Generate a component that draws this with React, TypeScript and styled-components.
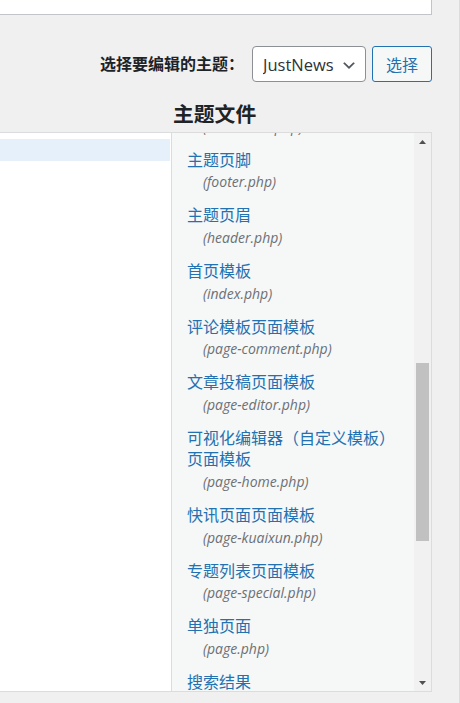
import React, { useLayoutEffect, useRef } from "react";
import styled, { createGlobalStyle } from "styled-components";

const GlobalStyle = createGlobalStyle`
  html, body {
    margin: 0;
    background: #f0f0f1;
  }
  body {
    font-family: "Open Sans", "Noto Sans CJK SC", sans-serif;
    font-size: 16px;
    color: #3c434a;
  }
`;

const Page = styled.div`
  box-sizing: border-box;
  width: 460px;
  min-height: 703px;
  padding-right: 27px;
  border-right: 1px solid #dcdcde;
`;

const TopBox = styled.div`
  box-sizing: border-box;
  height: 15px;
  background: #fff;
  border-right: 1px solid #c3c4c7;
  border-bottom: 1px solid #c3c4c7;
`;

const ThemeRow = styled.form`
  display: flex;
  justify-content: flex-end;
  align-items: center;
  margin: 31px 0 0;
  height: 36px;
`;

const Label = styled.label`
  margin-right: 8px;
  font-weight: 600;
  color: #1d2327;
  line-height: 36px;
`;

const SelectWrap = styled.div`
  position: relative;
  width: 114px;
  height: 36px;
`;

const Select = styled.select`
  appearance: none;
  box-sizing: border-box;
  width: 100%;
  height: 100%;
  margin: 0;
  padding: 0 24px 0 10px;
  border: 1px solid #8c8f94;
  border-radius: 4px;
  background: #fff;
  color: #2c3338;
  font: inherit;
  font-size: 16.5px;
`;

const Chevron = styled.svg`
  position: absolute;
  right: 9px;
  top: 11px;
  width: 16px;
  height: 16px;
  pointer-events: none;
`;

const Button = styled.button`
  box-sizing: border-box;
  width: 60px;
  height: 36px;
  margin-left: 6px;
  padding: 0;
  border: 1px solid #2271b1;
  border-radius: 3px;
  background: #f6f7f7;
  color: #2271b1;
  font: inherit;
  font-size: 16px;
`;

const EditorGrid = styled.div`
  display: grid;
  grid-template-columns: 171px 1fr;
`;

const Heading = styled.h2`
  grid-column: 2;
  margin: 18px 0 4px;
  padding-left: 2px;
  font-size: 20.8px;
  line-height: 28px;
  font-weight: 600;
  color: #1d2327;
`;

const Frame = styled.div`
  grid-column: 1 / -1;
  display: grid;
  grid-template-columns: 171px 1fr;
  grid-template-rows: minmax(0, 1fr);
  box-sizing: border-box;
  height: 560px;
  border-top: 1px solid #dcdcde;
  border-bottom: 1px solid #dcdcde;
`;

const CodeArea = styled.div`
  background: #fff;
  padding-top: 6px;
`;

const ActiveLine = styled.div`
  height: 22px;
  margin-right: 1px;
  background: #e6f0fb;
`;

const Sidebar = styled.div`
  display: flex;
  overflow: hidden;
  background: #f6f7f7;
  border-left: 1px solid #dcdcde;
  border-right: 1px solid #dcdcde;
`;

const FileList = styled.ul`
  flex: 1;
  overflow: hidden;
  margin: 0;
  padding: 0 12px 0 15px;
  list-style: none;
`;

const FileItem = styled.li`
  padding: 6px 0;
`;

const FileName = styled.a`
  display: block;
  color: #2271b1;
  font-size: 16px;
  line-height: 21.6px;
  text-decoration: none;
`;

const FileNote = styled.span`
  display: block;
  margin-left: 16px;
  color: #6b7075;
  font-size: 14px;
  font-style: italic;
  line-height: 22px;
`;

const Scrollbar = styled.div`
  display: flex;
  flex-direction: column;
  width: 17px;
  background: #f1f1f1;
`;

const ArrowButton = styled.div`
  display: flex;
  align-items: center;
  justify-content: center;
  height: 17px;
`;

const Track = styled.div`
  flex: 1;
`;

const Thumb = styled.div<{ $top: number; $size: number }>`
  width: 13px;
  height: ${(p) => p.$size}px;
  margin: ${(p) => p.$top}px 2px 0;
  background: #c1c1c1;
`;

const files = [
  { name: "文章归档", file: "archive.php" },
  { name: "分类目录模板", file: "category.php" },
  { name: "评论", file: "comments.php" },
  { name: "主题页脚", file: "footer.php" },
  { name: "主题页眉", file: "header.php" },
  { name: "首页模板", file: "index.php" },
  { name: "评论模板页面模板", file: "page-comment.php" },
  { name: "文章投稿页面模板", file: "page-editor.php" },
  { name: "可视化编辑器（自定义模板）页面模板", file: "page-home.php" },
  { name: "快讯页面页面模板", file: "page-kuaixun.php" },
  { name: "专题列表页面模板", file: "page-special.php" },
  { name: "单独页面", file: "page.php" },
  { name: "搜索结果", file: "search.php" },
  { name: "侧边栏", file: "sidebar.php" },
  { name: "单篇文章", file: "single.php" },
];

const App = () => {
  const listRef = useRef<HTMLUListElement>(null);

  useLayoutEffect(() => {
    if (listRef.current) listRef.current.scrollTop = 156;
  }, []);

  return (
    <>
      <GlobalStyle />
      <Page>
        <TopBox />
        <ThemeRow onSubmit={(e) => e.preventDefault()}>
          <Label htmlFor="theme">选择要编辑的主题：</Label>
          <SelectWrap>
            <Select id="theme" defaultValue="justnews">
              <option value="justnews">JustNews</option>
            </Select>
            <Chevron viewBox="0 0 20 20">
              <path d="M4.5 6.5l5.5 5.5 5.5-5.5 1.8 1.3-7.3 7.2-7.3-7.2z" fill="#50575e" />
            </Chevron>
          </SelectWrap>
          <Button type="submit">选择</Button>
        </ThemeRow>
        <EditorGrid>
          <Heading>主题文件</Heading>
          <Frame>
            <CodeArea>
              <ActiveLine />
            </CodeArea>
            <Sidebar>
              <FileList ref={listRef}>
                {files.map((f) => (
                  <FileItem key={f.file}>
                    <FileName href="#">
                      {f.name}
                      <FileNote>({f.file})</FileNote>
                    </FileName>
                  </FileItem>
                ))}
              </FileList>
              <Scrollbar>
                <ArrowButton>
                  <svg width="7" height="4" viewBox="0 0 7 4">
                    <path d="M3.5 0L7 4H0z" fill="#505050" />
                  </svg>
                </ArrowButton>
                <Track>
                  <Thumb $top={213} $size={178} />
                </Track>
                <ArrowButton>
                  <svg width="7" height="4" viewBox="0 0 7 4">
                    <path d="M0 0h7L3.5 4z" fill="#505050" />
                  </svg>
                </ArrowButton>
              </Scrollbar>
            </Sidebar>
          </Frame>
        </EditorGrid>
      </Page>
    </>
  );
};

export default App;
